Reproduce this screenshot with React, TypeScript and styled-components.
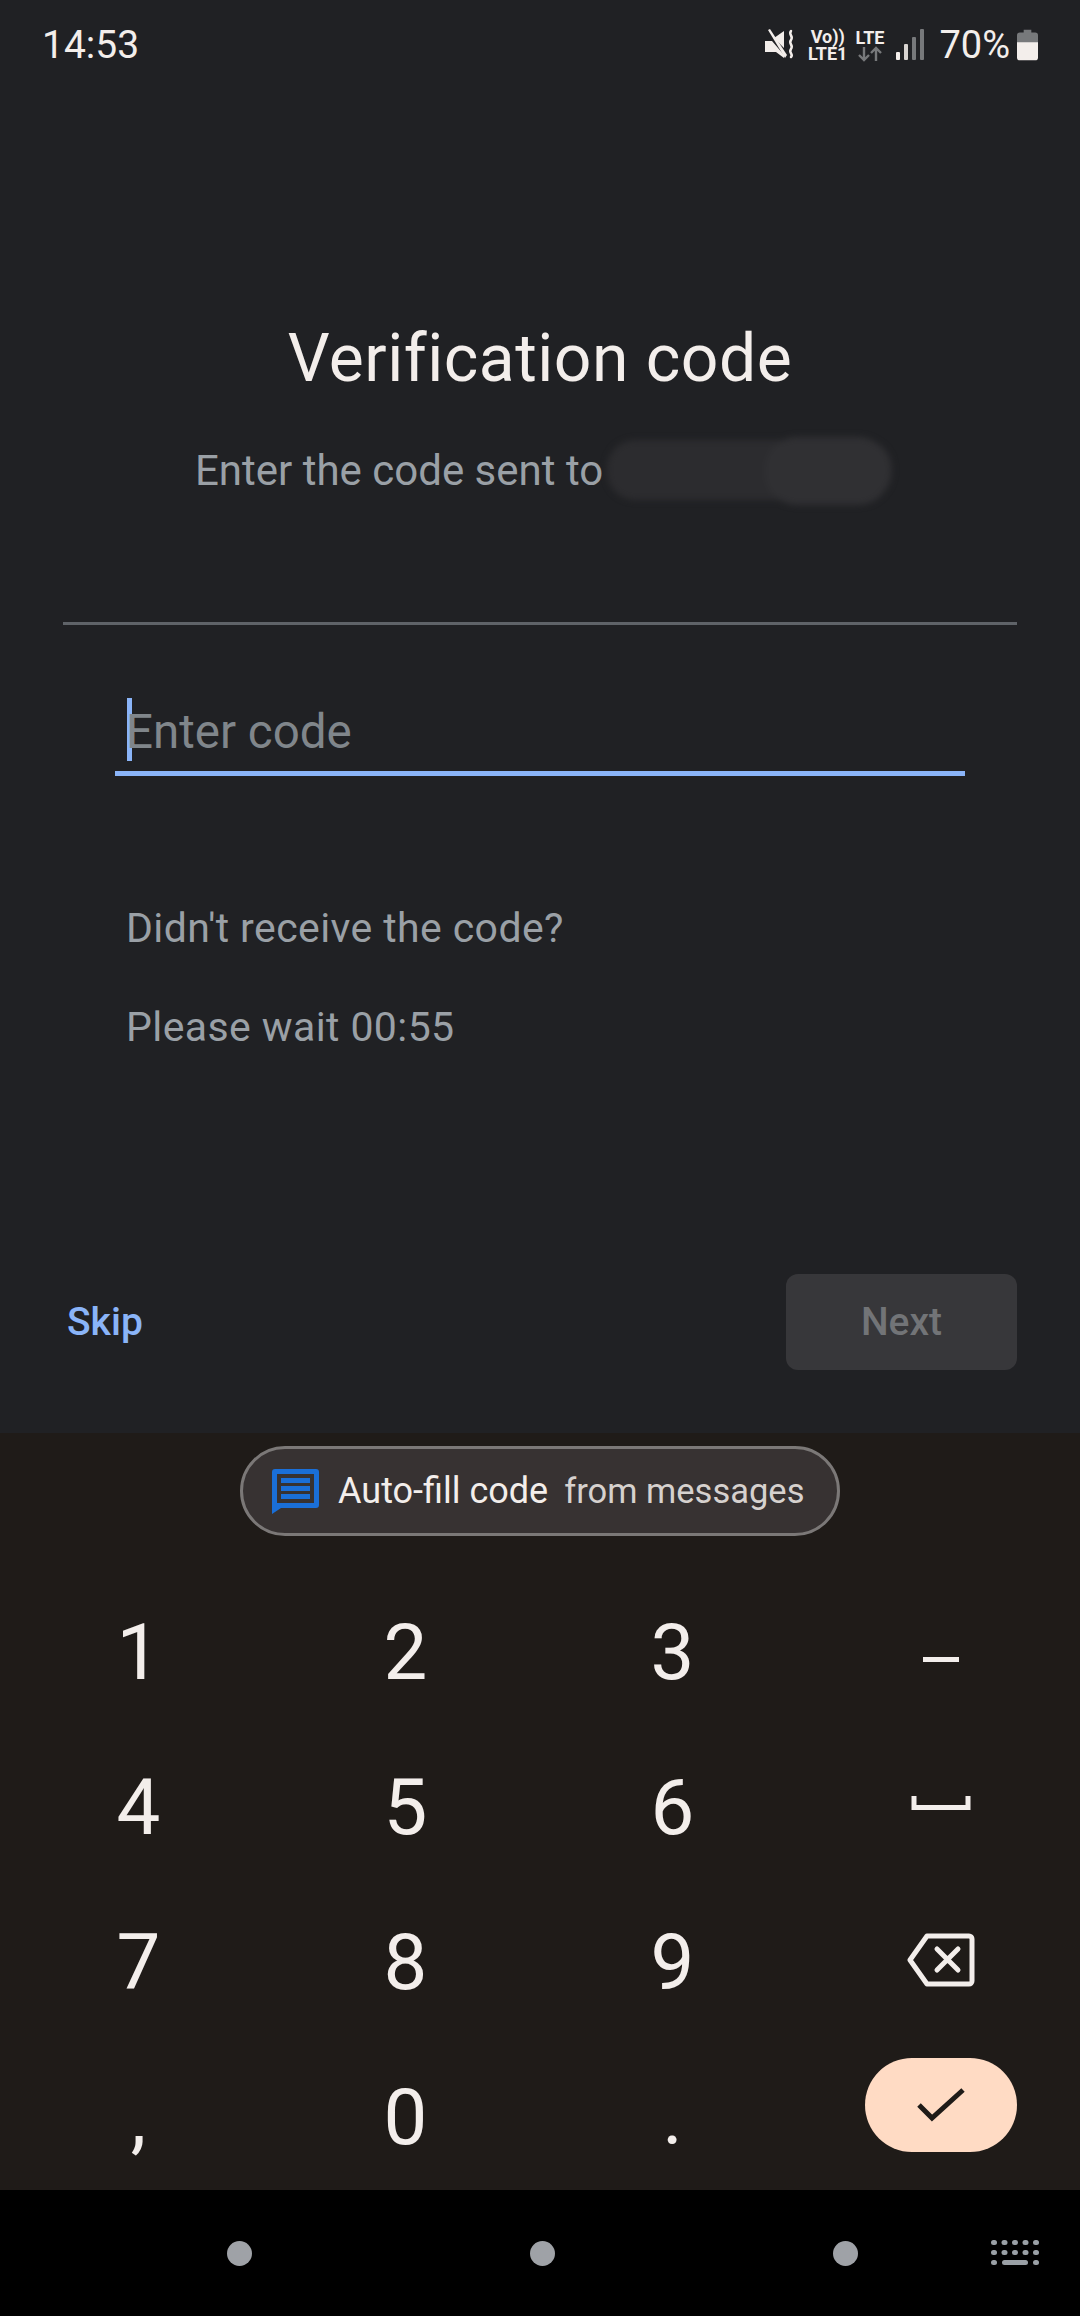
import React from 'react';
import styled, { createGlobalStyle } from 'styled-components';

const GlobalStyle = createGlobalStyle`
  html, body {
    margin: 0;
    padding: 0;
    background: #202124;
  }
  * {
    box-sizing: border-box;
  }
`;

const Screen = styled.div`
  width: 1080px;
  height: 2316px;
  display: flex;
  flex-direction: column;
  overflow: hidden;
  font-family: Roboto, "Liberation Sans", sans-serif;
  background: #202124;
`;

const StatusBar = styled.div`
  height: 90px;
  flex-shrink: 0;
  padding: 0 42px;
  display: flex;
  align-items: center;
  justify-content: space-between;
  color: #f3eeeb;
`;

const Clock = styled.span`
  font-size: 39px;
  line-height: 90px;
`;

const StatusIcons = styled.div`
  display: flex;
  align-items: center;
  height: 40px;
`;

const NetStack = styled.div<{ $ml: number }>`
  display: flex;
  flex-direction: column;
  align-items: center;
  margin-left: ${(p) => p.$ml}px;
  font-size: 18px;
  font-weight: 700;
  line-height: 17px;
`;

const SignalSlot = styled.span`
  display: flex;
  margin-left: 12px;
`;

const Percent = styled.span`
  font-size: 38px;
  line-height: 40px;
  margin-left: 15px;
`;

const Main = styled.main`
  height: 1343px;
  flex-shrink: 0;
  display: flex;
  flex-direction: column;
`;

const Title = styled.h1`
  margin: 226px 0 0;
  height: 86px;
  font-size: 66px;
  font-weight: 400;
  line-height: 86px;
  letter-spacing: 0.5px;
  text-align: center;
  color: #f3eeeb;
`;

const SubRow = styled.div`
  margin-top: 33px;
  height: 70px;
  display: flex;
  align-items: center;
  padding-left: 195px;
`;

const SubText = styled.span`
  font-size: 42px;
  color: #9aa0a6;
`;

const Redacted = styled.span`
  position: relative;
  width: 285px;
  height: 60px;
  margin-left: 4px;
  border-radius: 28px;
  background: #2c2c2f;
  filter: blur(3px);

  &::after {
    content: '';
    position: absolute;
    right: 2px;
    top: -3px;
    width: 125px;
    height: 68px;
    border-radius: 32px;
    background: #303033;
  }
`;

const Divider = styled.div`
  margin: 117px 63px 0;
  height: 3px;
  background: #5f6368;
`;

const CodeField = styled.div`
  margin: 73px 115px 0;
  height: 78px;
  border-bottom: 5px solid #8ab4f8;
  display: flex;
  align-items: flex-start;
  padding-left: 12px;
`;

const Caret = styled.span`
  width: 5px;
  height: 63px;
  background: #8ab4f8;
`;

const Placeholder = styled.span`
  margin-left: -6px;
  padding-top: 1px;
  font-size: 47.5px;
  line-height: 66px;
  color: #80868b;
`;

const Helper = styled.p<{ $mt: number }>`
  margin: ${(p) => p.$mt}px 0 0 126px;
  font-size: 41px;
  line-height: 50px;
  letter-spacing: 0.4px;
  color: #9aa0a6;
`;

const Actions = styled.div`
  margin-top: 222px;
  padding: 0 63px 0 67px;
  display: flex;
  align-items: center;
  justify-content: space-between;
`;

const SkipLink = styled.span`
  font-size: 39px;
  font-weight: 500;
  color: #8ab4f8;
`;

const NextButton = styled.span`
  width: 231px;
  height: 96px;
  border-radius: 12px;
  background: #37373a;
  display: flex;
  align-items: center;
  justify-content: center;
  font-size: 39px;
  font-weight: 500;
  color: #727477;
`;

const Keyboard = styled.section`
  height: 757px;
  flex-shrink: 0;
  background: #1f1b18;
  display: flex;
  flex-direction: column;
  align-items: center;
`;

const Chip = styled.div`
  margin-top: 13px;
  flex-shrink: 0;
  width: 600px;
  height: 90px;
  border: 3px solid #7b7877;
  border-radius: 45px;
  background: #373232;
  display: flex;
  align-items: center;
  padding-left: 29px;
`;

const ChipMain = styled.span`
  margin-left: 19px;
  font-size: 36px;
  color: #f3eeeb;
`;

const ChipSub = styled.span`
  margin-left: 16px;
  font-size: 34.5px;
  color: #d6d1ce;
`;

const KeyGrid = styled.div`
  width: 1080px;
  flex-shrink: 0;
  margin-top: 39px;
  padding: 0 5px;
  display: grid;
  grid-template-columns: repeat(3, 267px) 269px;
  grid-auto-rows: 155px;
`;

const Key = styled.div`
  display: flex;
  align-items: center;
  justify-content: center;
  font-size: 78px;
  font-weight: 400;
  color: #f3eeeb;
`;

const IconSlot = styled.span<{ $mt: number }>`
  display: flex;
  margin-top: ${(p) => p.$mt}px;
`;

const DoneButton = styled.div`
  width: 152px;
  height: 94px;
  margin-left: 0;
  margin-bottom: 26px;
  border-radius: 47px;
  background: #ffdbc4;
  display: flex;
  align-items: center;
  justify-content: center;
`;

const NavBar = styled.nav`
  flex: 1;
  background: #000;
  position: relative;
  display: flex;
  align-items: center;
  padding-left: 227px;
  gap: 278px;
`;

const NavDot = styled.span`
  width: 25px;
  height: 25px;
  border-radius: 50%;
  background: #9fa2a7;
`;

const KeyboardGlyph = styled.svg`
  position: absolute;
  left: 990px;
  top: 50px;
`;

const BatteryGlyph = styled.svg`
  margin-left: 7px;
`;

const MuteIcon = () => (
  <svg width="30" height="32" viewBox="0 0 30 32" fill="#f3eeeb">
    <path d="M0 12h5l2 0 12 14v3l-8-6H0z" />
    <path d="M9 9l10-7v17z" />
    <path d="M3 1l2-1 17 26-2 3z" />
    <path
      d="M26 2c-3 4 3 5 0 9s3 5 0 9 3 5 0 8"
      fill="none"
      stroke="#f3eeeb"
      strokeWidth="2.5"
      strokeLinecap="round"
    />
  </svg>
);

const LteArrows = () => (
  <svg width="24" height="16" viewBox="0 0 24 16" fill="none" stroke="#77797b" strokeWidth="2.4">
    <path d="M6 1v13M1 9l5 5 5-5" />
    <path d="M18 15V2M13 7l5-5 5 5" />
  </svg>
);

const SignalBars = () => (
  <svg width="28" height="32" viewBox="0 0 28 32">
    <rect x="0" y="23" width="4" height="8" rx="1" fill="#f3eeeb" />
    <rect x="8" y="15" width="4" height="16" rx="1" fill="#d8d4d1" />
    <rect x="16" y="8" width="4" height="23" rx="1" fill="#77797b" />
    <rect x="24" y="0" width="4" height="31" rx="1" fill="#77797b" />
  </svg>
);

const BatteryIcon = () => (
  <BatteryGlyph width="21" height="32" viewBox="0 0 22 32">
    <path d="M7 0h8v3h4a3 3 0 0 1 3 3v8H0V6a3 3 0 0 1 3-3h4z" fill="#77797b" />
    <path d="M0 13h22v16a3 3 0 0 1-3 3H3a3 3 0 0 1-3-3z" fill="#f3eeeb" />
  </BatteryGlyph>
);

const MessageIcon = () => (
  <svg width="47" height="45" viewBox="0 0 47 45">
    <path
      d="M3 0h41a3 3 0 0 1 3 3v33a3 3 0 0 1-3 3H9l-9 6V3a3 3 0 0 1 3-3z"
      fill="#1a6fd8"
    />
    <rect x="5" y="5" width="37" height="29" fill="#373232" />
    <rect x="9" y="9" width="29" height="5" fill="#1a6fd8" />
    <rect x="9" y="17" width="29" height="5" fill="#1a6fd8" />
    <rect x="9" y="25" width="29" height="5" fill="#1a6fd8" />
  </svg>
);

const DashIcon = () => (
  <svg width="36" height="5" viewBox="0 0 36 5">
    <rect width="36" height="5" fill="#f3eeeb" />
  </svg>
);

const SpaceIcon = () => (
  <svg width="60" height="14" viewBox="0 0 60 14" fill="none" stroke="#f3eeeb" strokeWidth="5">
    <path d="M3 0v11.500h54V0" />
  </svg>
);

const BackspaceIcon = () => (
  <svg width="68" height="54" viewBox="0 0 68 54" fill="none" stroke="#f3eeeb" strokeWidth="5" strokeLinejoin="round" strokeLinecap="round">
    <path d="M20 3h42a3 3 0 0 1 3 3v42a3 3 0 0 1-3 3H20L3 27z" />
    <path d="M30 16l21 21M51 16L30 37" />
  </svg>
);

const CheckIcon = () => (
  <svg width="48" height="36" viewBox="0 0 48 36" fill="none" stroke="#1f1b18" strokeWidth="5">
    <path d="M2 18l13 13L46 3" />
  </svg>
);

const digits = ['1', '2', '3', '4', '5', '6', '7', '8', '9'];
const sideKeys = [
  <IconSlot key="dash" $mt={14}><DashIcon /></IconSlot>,
  <IconSlot key="space" $mt={-10}><SpaceIcon /></IconSlot>,
  <IconSlot key="back" $mt={-6}><BackspaceIcon /></IconSlot>,
];

export default function App() {
  return (
    <Screen>
      <GlobalStyle />
      <StatusBar>
        <Clock>14:53</Clock>
        <StatusIcons>
          <MuteIcon />
          <NetStack $ml={13}>
            <span>Vo))</span>
            <span>LTE1</span>
          </NetStack>
          <NetStack $ml={8}>
            <span>LTE</span>
            <LteArrows />
          </NetStack>
          <SignalSlot>
            <SignalBars />
          </SignalSlot>
          <Percent>70%</Percent>
          <BatteryIcon />
        </StatusIcons>
      </StatusBar>

      <Main>
        <Title>Verification code</Title>
        <SubRow>
          <SubText>Enter the code sent to</SubText>
          <Redacted />
        </SubRow>
        <Divider />
        <CodeField>
          <Caret />
          <Placeholder>Enter code</Placeholder>
        </CodeField>
        <Helper $mt={127}>Didn&apos;t receive the code?</Helper>
        <Helper $mt={49}>Please wait 00:55</Helper>
        <Actions>
          <SkipLink>Skip</SkipLink>
          <NextButton>Next</NextButton>
        </Actions>
      </Main>

      <Keyboard>
        <Chip>
          <MessageIcon />
          <ChipMain>Auto-fill code</ChipMain>
          <ChipSub>from messages</ChipSub>
        </Chip>
        <KeyGrid>
          {[0, 1, 2].map((row) => (
            <React.Fragment key={row}>
              {digits.slice(row * 3, row * 3 + 3).map((d) => (
                <Key key={d}>{d}</Key>
              ))}
              <Key>{sideKeys[row]}</Key>
            </React.Fragment>
          ))}
          <Key>,</Key>
          <Key>0</Key>
          <Key>.</Key>
          <Key>
            <DoneButton>
              <CheckIcon />
            </DoneButton>
          </Key>
        </KeyGrid>
      </Keyboard>

      <NavBar>
        <NavDot />
        <NavDot />
        <NavDot />
        <KeyboardGlyph width="50" height="26" viewBox="0 0 50 26" fill="#9aa0a6">
          {[0, 1, 2, 3, 4].map((i) => (
            <React.Fragment key={i}>
              <rect x={i * 10.5 + 1} y="0" width="6" height="5" rx="2.5" />
              <rect x={i * 10.5 + 1} y="10" width="6" height="5" rx="2.5" />
            </React.Fragment>
          ))}
          <rect x="1" y="20" width="6" height="5" rx="2.5" />
          <rect x="12" y="20" width="26" height="5" rx="2.500" />
          <rect x="43" y="20" width="6" height="5" rx="2.5" />
        </KeyboardGlyph>
      </NavBar>
    </Screen>
  );
}
